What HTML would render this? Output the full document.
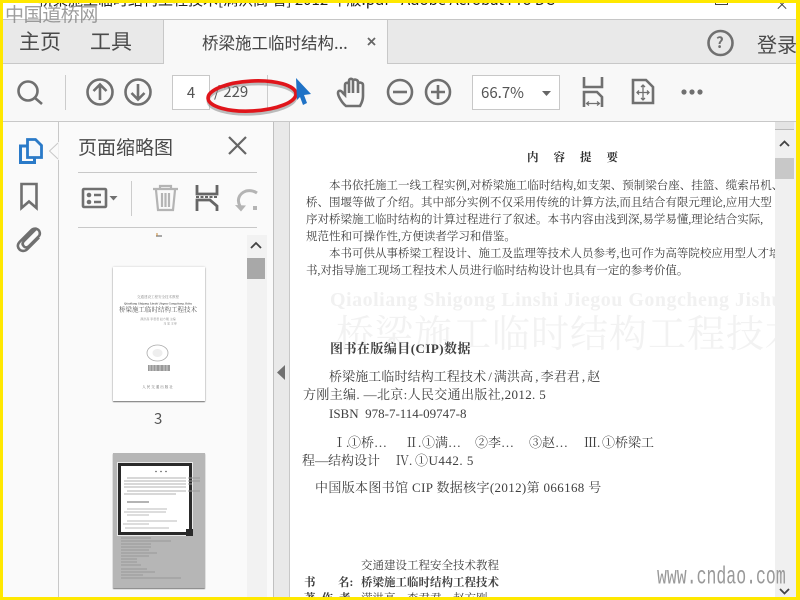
<!DOCTYPE html>
<html lang="zh">
<head>
<meta charset="utf-8">
<style>
html,body{margin:0;padding:0;width:800px;height:600px;overflow:hidden;background:#fff}
body{position:relative;font-family:"Noto Sans CJK SC","Liberation Sans",sans-serif;color:#4b4b4b}
#w{position:absolute;left:0;top:0;width:800px;height:600px;filter:blur(.35px);overflow:hidden}
.a{position:absolute;white-space:nowrap}
.s{font-family:"Liberation Serif","Noto Serif CJK SC",serif;color:#3f3f3f}
.t{font-size:13px;line-height:19px}
.g{padding:0 2px}
svg{position:absolute;overflow:visible}
.i{fill:none;stroke:#707070;stroke-width:2.6}
</style>
</head>
<body>
<div id="w">
<!-- title bar -->
<div class="a" style="left:38px;top:-9px;font-size:15px;line-height:18px;color:#222">桥梁施工临时结构工程技术[满洪高 著] 2012 年版.pdf - Adobe Acrobat Pro DC</div>
<div class="a" style="left:715px;top:0;width:11px;height:4px;border:1px solid #444;border-top:0"></div>
<div class="a" style="left:775px;top:-5px;font-size:14px;color:#444">×</div>
<div class="a" style="left:0;top:19px;width:800px;height:1px;background:#c6c6c6"></div>

<!-- tab bar -->
<div class="a" style="left:0;top:20px;width:800px;height:43px;background:#e9e9e9;border-bottom:1px solid #c8c8c8"></div>
<div class="a" style="left:163px;top:20px;width:225px;height:45px;background:#f8f8f8;border-left:1px solid #c8c8c8;border-right:1px solid #c8c8c8;box-sizing:border-box"></div>
<div class="a" style="left:19px;top:28px;font-size:21px;line-height:26px;color:#4a4a4a">主页</div>
<div class="a" style="left:90px;top:28px;font-size:21px;line-height:26px;color:#4a4a4a">工具</div>
<div class="a" style="left:202px;top:31px;font-size:16.500px;line-height:22px;color:#444">桥梁施工临时结构...</div>
<svg style="left:0;top:0" width="800" height="600">
<path d="M368 38l7 7M375 38l-7 7" stroke="#666" stroke-width="1.800" fill="none"/>
<circle cx="720.500" cy="43" r="12" class="i"/>
</svg>
<div class="a" style="left:716px;top:32px;font-size:15px;line-height:22px;font-weight:bold;color:#707070">?</div>
<div class="a" style="left:757px;top:31px;width:39px;overflow:hidden;font-size:20px;line-height:26px;color:#4a4a4a">登录</div>

<!-- toolbar -->
<div class="a" style="left:0;top:64px;width:800px;height:57px;background:#f8f8f8;border-bottom:1px solid #c8c8c8"></div>
<div class="a" style="left:65px;top:75px;width:1px;height:35px;background:#ccc"></div>
<div class="a" style="left:267px;top:75px;width:1px;height:35px;background:#ccc"></div>
<div class="a" style="left:172px;top:75px;width:38px;height:35px;background:#fff;border:1px solid #c8c8c8;box-sizing:border-box;text-align:center;font-size:15px;line-height:33px;color:#555">4</div>
<div class="a" style="left:214px;top:81px;font-size:15px;line-height:22px;color:#555">/ 229</div>
<div class="a" style="left:472px;top:75px;width:88px;height:35px;background:#fff;border:1px solid #c8c8c8;box-sizing:border-box;font-size:15px;line-height:33px;color:#555;padding-left:8px">66.7%</div>

<svg style="left:0;top:0" width="800" height="600">
<!-- search -->
<circle cx="28" cy="91" r="9.500" class="i"/><path d="M35 98l7 6" class="i" stroke-width="3"/>
<!-- up / down -->
<circle cx="100" cy="92" r="12.500" class="i"/><path d="M100 100V85M93.500 91l6.500-6.500 6.500 6.500" class="i"/>
<circle cx="138" cy="92" r="12.500" class="i"/><path d="M138 84v15M131.500 93l6.500 6.500 6.500-6.500" class="i"/>
<!-- red ellipse -->
<ellipse cx="252" cy="99" rx="44" ry="15" transform="rotate(-3 252 99)" fill="none" stroke="#888" stroke-width="3" opacity=".55"/>
<ellipse cx="252" cy="96" rx="44" ry="15" transform="rotate(-3 252 96)" fill="none" stroke="#e0151b" stroke-width="3.600"/>
<!-- cursor arrow -->
<path d="M296 78L311 94 304 95 307 103 303 105 300 97 297 100Z" fill="#1f72c6"/>
<!-- hand -->
<path d="M346 106C342 103 338 96 338 93 338 90 341 90 343 93L345 95V85C345 82 349 82 349 85V81C349 78 353 78 353 81V81C353 79 358 79 358 82V84C358 82 363 82 363 85V96C363 101 361 104 360 106ZM349 85V93M353 81V93M358 82V93" class="i" stroke-width="2"/>
<!-- minus / plus -->
<circle cx="400" cy="92" r="12" class="i"/><path d="M393 92h14" class="i"/>
<circle cx="438" cy="92" r="12" class="i"/><path d="M431 92h14M438 85v14" class="i"/>
<!-- dropdown -->
<path d="M542 91h9l-4.500 5z" fill="#666"/>
<!-- fit width -->
<path d="M584 77v10h18V77" class="i" stroke-width="3"/>
<path d="M584 107V92h13l5 5v10" class="i" stroke-width="3"/>
<path d="M587 103.500h12M589 101.500l-2.500 2 2.500 2M597 101.500l2.500 2-2.500 2" fill="none" stroke="#707070" stroke-width="1.200"/>
<!-- fit page -->
<path d="M633 80h13l7 7v16h-20z" class="i" stroke-width="2.800"/>
<path d="M643 85v7M643 93v7M637 92.500h12M641 87l2-2 2 2M641 98l2 2 2-2M639 90.500l-2 2 2 2M647 90.500l2 2-2 2" fill="none" stroke="#707070" stroke-width="1.300"/>
<!-- dots -->
<circle cx="684" cy="92" r="2.600" fill="#707070"/><circle cx="692" cy="92" r="2.600" fill="#707070"/><circle cx="700" cy="92" r="2.600" fill="#707070"/>
</svg>

<!-- left rail + panel -->
<div class="a" style="left:0;top:122px;width:273px;height:478px;background:#fafafa"></div>
<div class="a" style="left:58px;top:122px;width:1px;height:478px;background:#c8c8c8"></div>
<div class="a" style="left:273px;top:122px;width:1px;height:478px;background:#c0c0c0"></div>
<div class="a" style="left:274px;top:122px;width:15px;height:478px;background:#e9e9e9"></div>
<div class="a" style="left:289px;top:122px;width:1px;height:478px;background:#c8c8c8"></div>
<div class="a" style="left:247px;top:235px;width:20px;height:365px;background:#f2f2f2"></div>
<div class="a" style="left:247px;top:258px;width:18px;height:21px;background:#a8a8a8"></div>

<div class="a" style="left:78px;top:133px;font-size:19px;line-height:28px;color:#4a4a4a">页面缩略图</div>
<div class="a" style="left:78px;top:172px;width:179px;height:1px;background:#c8c8c8"></div>
<div class="a" style="left:78px;top:227px;width:179px;height:1px;background:#c8c8c8"></div>
<div class="a" style="left:131px;top:181px;width:1px;height:35px;background:#ccc"></div>

<svg style="left:0;top:0" width="800" height="600">
<!-- notch -->
<path d="M58 143l-8.500 8 8.500 8" fill="#fafafa" stroke="#c8c8c8"/>
<path d="M59 142v18" stroke="#fafafa" stroke-width="1.500"/>
<!-- pages icon -->
<path d="M27 146h-6.500v16.500h14V158" fill="none" stroke="#2a7ac8" stroke-width="3"/>
<path d="M27.500 139.500h8l6 6v12h-14z" fill="#f4f8fc" stroke="#2a7ac8" stroke-width="2.800"/>
<!-- bookmark -->
<path d="M21.500 184h15v24l-7.500-6.500-7.500 6.500z" class="i" stroke-width="2.800"/>
<!-- clip -->
<path d="M37 231L24 244C21.500 246.500 23 248.500 24 249.500S27 251 29 249L38.500 239.500C41 237 39.500 234 38.500 233S34 230.500 31.500 233L20 244.500C16.500 248 18 251 19.500 252.500S24.500 255 27.500 252L39 240.500" class="i" stroke-width="2.300" transform="translate(0,-3)"/>
<!-- close -->
<path d="M229 137l17 17M246 137l-17 17" fill="none" stroke="#666" stroke-width="2.200"/>
<!-- options -->
<rect x="83" y="189" width="23" height="18" rx="1" class="i"/>
<circle cx="89" cy="195" r="2.300" fill="#707070"/><circle cx="89" cy="202" r="2.300" fill="#707070"/>
<path d="M94 195h7M94 202h7" class="i" stroke-width="2.200"/>
<path d="M109.500 196h8l-4 4.500z" fill="#707070"/>
<!-- trash -->
<path d="M153 189h25M160 189v-3h11v3M156 190l2 20h15l2-20M162 193v14M165.500 193v14M169 193v14" fill="none" stroke="#b4b4b4" stroke-width="2.200"/>
<!-- extract -->
<path d="M197 185v9h20v-9M197 211v-11h13l7 6v5" fill="none" stroke="#666" stroke-width="2.800"/>
<path d="M196 197h22" stroke="#666" stroke-width="2" stroke-dasharray="3 1.500"/>
<!-- rotate -->
<path d="M240 206c-3-5-2-12 6-15 4-1 8 0 11 2" fill="none" stroke="#b4b4b4" stroke-width="3"/>
<path d="M235 205l11 .5-5 6z" fill="#b4b4b4"/>
<rect x="253" y="206" width="4" height="4" fill="#b4b4b4"/>
<!-- stub -->
<path d="M156 236h6" stroke="#555" stroke-width="1"/><path d="M157 233v3" stroke="#c98a3a" stroke-width="1"/>
<!-- scroll up -->
<path d="M251 248l5-5 5 5" fill="none" stroke="#444" stroke-width="1.800"/>
<!-- collapse -->
<path d="M285 365v15l-8-7.500z" fill="#707070"/>
</svg>

<!-- thumbnail 3 -->
<div class="a" style="left:113px;top:267px;width:92px;height:134px;background:#fff;box-shadow:0 1px 1px #777,0 0 2px #ccc"></div>
<svg style="left:112px;top:266px" width="93" height="135">
<text x="46" y="32" font-size="3.500" text-anchor="middle" fill="#888" font-family="Noto Serif CJK SC">交通建设工程安全技术教程</text>
<text x="46" y="38.500" font-size="3.200" text-anchor="middle" fill="#666" font-family="Liberation Serif" font-weight="bold" font-style="italic">Qiaoliang Shigong Linshi Jiegou Gongcheng Jishu</text>
<text x="46" y="45.500" font-size="6.500" text-anchor="middle" fill="#555" font-family="Noto Serif CJK SC">桥梁施工临时结构工程技术</text>
<text x="46" y="54" font-size="3" text-anchor="middle" fill="#888" font-family="Noto Serif CJK SC">满洪高 李君君 赵方刚 主编</text>
<text x="58" y="58.500" font-size="3" text-anchor="middle" fill="#888" font-family="Noto Serif CJK SC">马 宏 主审</text>
<ellipse cx="45.500" cy="87" rx="10.500" ry="8" fill="none" stroke="#aaa" stroke-width=".8"/>
<ellipse cx="45.500" cy="87" rx="5" ry="4" fill="#eee"/>
<rect x="36" y="99" width="22" height="6" fill="#999"/>
<path d="M38 99v6M41 99v6M44 99v6M48 99v6M52 99v6M55 99v6" stroke="#ddd" stroke-width=".8"/>
<text x="46" y="122" font-size="3.500" text-anchor="middle" fill="#666" font-family="Noto Serif CJK SC" letter-spacing="1">人民交通出版社</text>
</svg>
<div class="a" style="left:154px;top:408px;font-size:15px;line-height:22px;color:#555">3</div>

<!-- thumbnail 4 -->
<div class="a" style="left:113px;top:453px;width:92px;height:135px;background:#b6b6b6;box-shadow:0 1px 1px #777"></div>
<svg style="left:112px;top:453px" width="93" height="135">
<path d="M9 76h16M9 79h18M9 82h60M9 85h30M9 88h50M9 91h30M9 94h30M9 97h28M9 100h36M9 103h28M9 106h16M9 109h16M9 112h20M9 116h26M9 119h34M9 122h22M9 125h60" stroke="#989898" stroke-width="1"/>
</svg>
<div class="a" style="left:118px;top:463px;width:68px;height:66px;background:#fff;border:3px solid #2a2a2a;box-shadow:0 0 0 1px #e8e8e8"></div>
<svg style="left:118px;top:463px" width="90" height="75">
<path d="M37 8.500h15" stroke="#888" stroke-width="1.200" stroke-dasharray="2 3"/>
<path d="M9 15h59M6 18h62M6 21h62M6 24h62M9 28h59M6 31h52" stroke="#b0b0b0" stroke-width="1"/>
<path d="M70 15h12M70 18h12M70 21h4M70 28h12" stroke="#999" stroke-width="1"/>
<path d="M9 39h22" stroke="#888" stroke-width="1.200"/>
<path d="M9 46h40M6 49h42M9 52h22M9 58h50M5 61h26M7 65h44" stroke="#bbb" stroke-width="1"/>
<rect x="68" y="66" width="7" height="7" fill="#2a2a2a"/>
</svg>

<!-- document -->
<div class="a" style="left:290px;top:122px;width:485px;height:478px;background:#fff;overflow:hidden">
<div class="a s" style="left:40px;top:166px;font-size:20px;line-height:24px;color:#f1f1f1;letter-spacing:.5px;font-weight:bold">Qiaoliang Shigong Linshi Jiegou Gongcheng Jishu</div>
<div class="a s" style="left:46px;top:190px;font-size:38px;line-height:46px;color:#f2f2f2;letter-spacing:1px">桥梁施工临时结构工程技术</div>

<div class="a s" style="left:237px;top:28px;font-size:11.500px;line-height:16px;font-weight:bold;letter-spacing:15px;color:#333">内容提要</div>
<div class="a s" style="left:39px;top:56px;font-size:11.500px;line-height:17px">本书依托施工一线工程实例,对桥梁施工临时结构,如支架、预制梁台座、挂篮、缆索吊机、施</div>
<div class="a s" style="left:16px;top:73px;font-size:11.500px;line-height:17px">桥、围堰等做了介绍。其中部分实例不仅采用传统的计算方法,而且结合有限元理论,应用大型</div>
<div class="a s" style="left:16px;top:90px;font-size:11.500px;line-height:17px">序对桥梁施工临时结构的计算过程进行了叙述。本书内容由浅到深,易学易懂,理论结合实际,</div>
<div class="a s" style="left:16px;top:107px;font-size:11.500px;line-height:17px">规范性和可操作性,方便读者学习和借鉴。</div>
<div class="a s" style="left:39px;top:124px;font-size:11.500px;line-height:17px">本书可供从事桥梁工程设计、施工及监理等技术人员参考,也可作为高等院校应用型人才培</div>
<div class="a s" style="left:16px;top:141px;font-size:11.500px;line-height:17px">书,对指导施工现场工程技术人员进行临时结构设计也具有一定的参考价值。</div>

<div class="a s" style="left:40px;top:218px;font-size:13px;line-height:18px;font-weight:bold;letter-spacing:.45px">图书在版编目(CIP)数据</div>
<div class="a s t" style="left:39px;top:245px;letter-spacing:.1px">桥梁施工临时结构工程技术<span class="g">/</span>满洪高<span class="g">,</span>李君君<span class="g">,</span>赵</div>
<div class="a s t" style="left:13px;top:263px;letter-spacing:.35px">方刚主编. —北京:人民交通出版社,2012. 5</div>
<div class="a s t" style="left:39px;top:282px">ISBN &nbsp;978-7-114-09747-8</div>
<div class="a s t" style="left:43px;top:311px">Ⅰ.</div>
<div class="a s t" style="left:58px;top:311px">①桥…</div>
<div class="a s t" style="left:115px;top:311px">Ⅱ.</div>
<div class="a s t" style="left:132px;top:311px">①满…</div>
<div class="a s t" style="left:185px;top:311px">②李…</div>
<div class="a s t" style="left:239px;top:311px">③赵…</div>
<div class="a s t" style="left:294px;top:311px">Ⅲ.</div>
<div class="a s t" style="left:312px;top:311px">①桥梁工</div>
<div class="a s t" style="left:12px;top:329px">程—结构设计</div>
<div class="a s t" style="left:106px;top:329px">Ⅳ.</div>
<div class="a s t" style="left:125px;top:329px;letter-spacing:.5px">①U442. 5</div>
<div class="a s t" style="left:25px;top:356px;letter-spacing:.35px">中国版本图书馆 CIP 数据核字(2012)第 066168 号</div>
<div class="a s" style="left:71px;top:436px;font-size:11.500px;line-height:16px">交通建设工程安全技术教程</div>
<div class="a s" style="left:14px;top:453px;font-size:11.500px;line-height:16px;font-weight:bold">书</div>
<div class="a s" style="left:48px;top:453px;font-size:11.500px;line-height:16px;font-weight:bold">名:</div>
<div class="a s" style="left:71px;top:453px;font-size:11.500px;line-height:16px;font-weight:bold">桥梁施工临时结构工程技术</div>
<div class="a s" style="left:14px;top:469px;font-size:11.500px;line-height:16px;font-weight:bold;letter-spacing:6px">著作者</div>
<div class="a s" style="left:71px;top:469px;font-size:11.500px;line-height:16px">满洪高　李君君　赵方刚</div>
</div>

<!-- doc scrollbar -->
<div class="a" style="left:775px;top:122px;width:21px;height:478px;background:#f0f0f0"></div>
<div class="a" style="left:775px;top:158px;width:19px;height:21px;background:#c8c8c8"></div>
<div class="a" style="left:775px;top:122px;width:19px;height:7px;background:#e4e4e4;border-bottom:1px solid #bbb"></div>
<svg style="left:0;top:0" width="800" height="600">
<path d="M780 146l4.500-4.500 4.500 4.500" fill="none" stroke="#444" stroke-width="1.800"/>
<path d="M780 589l4.500 4.500 4.500-4.500" fill="none" stroke="#444" stroke-width="1.800"/>
</svg>

<!-- watermarks -->
<div class="a" style="left:5px;top:2px;font-family:'Noto Sans CJK SC',sans-serif;font-size:19px;line-height:24px;letter-spacing:-.4px;color:rgba(125,125,125,.75)">中国道桥网</div>
<div class="a" style="left:657px;top:563px;font-family:'Liberation Mono',monospace;font-size:22px;line-height:26px;color:#999;transform-origin:0 0;transform:scale(.75,1.150)">www.cndao.com</div>
</div>

<!-- yellow frame -->
<div class="a" style="left:0;top:0;width:800px;height:3px;background:#ffe800"></div>
<div class="a" style="left:0;top:597px;width:800px;height:3px;background:#ffe800"></div>
<div class="a" style="left:0;top:0;width:3px;height:600px;background:#ffe800"></div>
<div class="a" style="left:796px;top:0;width:4px;height:600px;background:#ffe800"></div>
</body>
</html>
